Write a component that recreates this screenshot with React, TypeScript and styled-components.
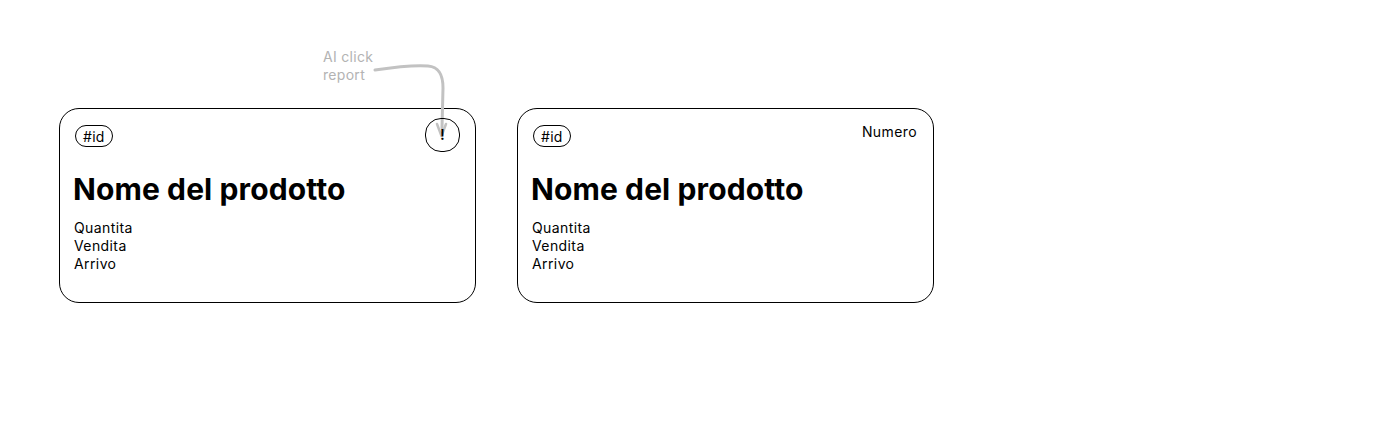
import React from "react";
import styled, { createGlobalStyle } from "styled-components";

const Global = createGlobalStyle`
  html, body { margin: 0; padding: 0; background: #ffffff; }
  body { font-family: Inter, "Noto Sans", "Liberation Sans", sans-serif; color: #000; }
`;

const Page = styled.div`
  position: relative;
  width: 1381px;
  height: 427px;
  box-sizing: border-box;
  padding: 108px 0 0 59px;
  display: flex;
  align-items: flex-start;
  gap: 41px;
`;

const Card = styled.div`
  width: 417px;
  height: 195px;
  box-sizing: border-box;
  border: 1px solid #000;
  border-radius: 20px;
  padding: 9px 15px 0 13px;
  display: flex;
  flex-direction: column;
`;

const TopRow = styled.div`
  display: flex;
  justify-content: space-between;
  align-items: flex-start;
  height: 35px;
`;

const Badge = styled.span`
  display: inline-flex;
  align-items: center;
  justify-content: center;
  height: 22px;
  padding: 0 7px;
  box-sizing: border-box;
  border: 1px solid #000;
  border-radius: 11px;
  font-size: 14px;
  letter-spacing: 0.3px;
  margin-top: 7px;
  margin-left: 2px;
`;

const AlertButton = styled.button`
  position: relative;
  z-index: 2;
  width: 35px;
  height: 34px;
  box-sizing: border-box;
  border: 1px solid #000;
  border-radius: 16px;
  background: transparent;
  font-family: inherit;
  font-size: 15px;
  font-weight: 600;
  color: #000;
  padding: 0 0 2px 0;
  display: flex;
  align-items: center;
  justify-content: center;
`;

const NumberLabel = styled.span`
  font-size: 14px;
  line-height: 18px;
  letter-spacing: 0.4px;
  margin-top: 5px;
  margin-right: 1px;
`;

const Title = styled.h2`
  margin: 19px 0 0 0;
  font-size: 30px;
  line-height: 34px;
  font-weight: 700;
  letter-spacing: 0.1px;
`;

const Details = styled.ul`
  list-style: none;
  margin: 13px 0 0 1px;
  padding: 0;
  font-size: 14px;
  line-height: 18px;
  letter-spacing: 0.4px;
`;

const Note = styled.div`
  position: absolute;
  z-index: 1;
  left: 300px;
  top: 40px;
  width: 170px;
  height: 110px;
  pointer-events: none;
`;

const NoteText = styled.div`
  position: absolute;
  left: 23px;
  top: 8px;
  font-size: 14px;
  line-height: 18px;
  letter-spacing: 0.3px;
  color: #b3b3b3;
`;

const NoteArrow = styled.svg`
  position: absolute;
  left: 0;
  top: 0;
`;

const rows = ["Quantita", "Vendita", "Arrivo"];

export default function App() {
  return (
    <>
      <Global />
      <Page>
        <Card>
          <TopRow>
            <Badge>#id</Badge>
            <AlertButton>!</AlertButton>
          </TopRow>
          <Title>Nome del prodotto</Title>
          <Details>
            {rows.map((r) => (
              <li key={r}>{r}</li>
            ))}
          </Details>
        </Card>
        <Card>
          <TopRow>
            <Badge>#id</Badge>
            <NumberLabel>Numero</NumberLabel>
          </TopRow>
          <Title>Nome del prodotto</Title>
          <Details>
            {rows.map((r) => (
              <li key={r}>{r}</li>
            ))}
          </Details>
        </Card>
        <Note>
          <NoteText>
            AI click
            <br />
            report
          </NoteText>
          <NoteArrow width="170" height="110" viewBox="0 0 170 110">
            <path
              d="M75 30 C 95 27, 115 25, 128 26 C 140 27, 143 36, 143 48 L 142 88"
              fill="none"
              stroke="#c2c2c2"
              strokeWidth="3"
              strokeLinecap="round"
            />
            <path
              d="M137 84 L 141.5 96 L 146 84"
              fill="none"
              stroke="#c2c2c2"
              strokeWidth="2.5"
              strokeLinecap="round"
              strokeLinejoin="round"
            />
          </NoteArrow>
        </Note>
      </Page>
    </>
  );
}
